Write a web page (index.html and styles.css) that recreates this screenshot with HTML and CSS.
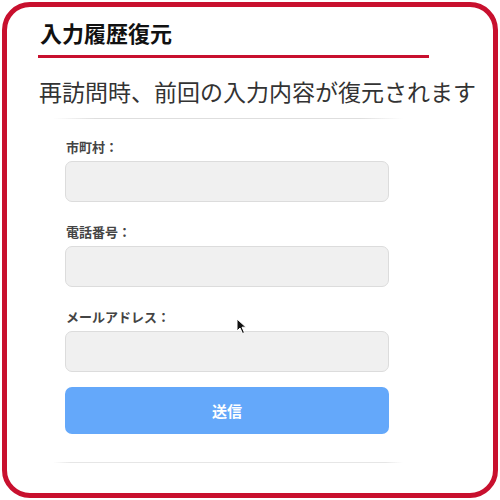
FILE: index.html
```html
<!DOCTYPE html>
<html lang="ja">
<head>
  <meta charset="UTF-8">
  <meta name="viewport" content="width=device-width, initial-scale=1.0">
  <title>入力履歴復元</title>
  <link rel="stylesheet" href="styles.css">
</head>
<body>
  <div class="frame">
    <h1 class="title">入力履歴復元</h1>
    <p class="subtitle">再訪問時、前回の入力内容が復元されます</p>

    <form class="form">
      <div class="field">
        <label for="city">市町村：</label>
        <input type="text" id="city">
      </div>
      <div class="field">
        <label for="tel">電話番号：</label>
        <input type="text" id="tel">
      </div>
      <div class="field">
        <label for="mail">メールアドレス：</label>
        <input type="text" id="mail">
      </div>
      <button type="button" class="submit">送信</button>
    </form>

    <!-- mouse pointer captured in the screenshot -->
    <svg class="cursor" width="11" height="17" viewBox="0 0 11 17">
      <path d="M1 1 L1 13 L4 10 L6.5 15.5 L8.5 14.6 L6 9.2 L10 9.2 Z" fill="#111" stroke="#fff" stroke-width="1"/>
    </svg>
  </div>
</body>
</html>
```

FILE: styles.css
```css
:root {
  --red: #c8102e;
  --text-color: #222222;
  --label-color: #444444;
  --field-bg: #f0f0f0;
  --field-border: #dcdcdc;
  --button-color: #64a8fa;
}

* {
  margin: 0;
  padding: 0;
  box-sizing: border-box;
}

body {
  font-family: "Noto Sans CJK JP", "Noto Sans", sans-serif;
  color: var(--text-color);
  background: #ffffff;
}

/* Frame */
.frame {
  position: relative;
  margin: 2px;
  height: 496px;
  border: 5px solid var(--red);
  border-radius: 28px;
  padding: 11px 0 0 31px;
  overflow: hidden;
}

.title {
  width: 391px;
  font-size: 22px;
  font-weight: 700;
  line-height: 28px;
  color: #111111;
  padding: 0 0 9px 2px;
  border-bottom: 3px solid var(--red);
}

.subtitle {
  margin-top: 17px;
  font-size: 23px;
  line-height: 32px;
  color: #333333;
  padding-left: 1px;
}

/* Form */
.form {
  margin: 10px 0 0 15px;
  width: 350px;
  padding: 20px 12px 29px;
  border-top: 1px solid transparent;
  background:
    linear-gradient(90deg, transparent, #dedede 12%, #dedede 88%, transparent) top / 100% 1px no-repeat,
    linear-gradient(90deg, transparent, #e6e6e6 5%, #e6e6e6 95%, transparent) bottom / 100% 1px no-repeat;
}

.field {
  display: flex;
  flex-direction: column;
  margin-bottom: 21px;
}

.field:last-of-type {
  margin-bottom: 15px;
}

.field label {
  font-size: 13px;
  font-weight: 700;
  line-height: 18px;
  color: var(--label-color);
  margin: 0 0 5px 1px;
}

.field input {
  width: 324px;
  height: 41px;
  background: var(--field-bg);
  border: 1px solid var(--field-border);
  border-radius: 7px;
  font-size: 14px;
  padding: 0 10px;
}

.submit {
  display: block;
  width: 324px;
  height: 47px;
  border: none;
  border-radius: 7px;
  background: var(--button-color);
  color: #ffffff;
  font-family: inherit;
  font-size: 15px;
  font-weight: 700;
}

.cursor {
  position: absolute;
  left: 229px;
  top: 311px;
}
```
